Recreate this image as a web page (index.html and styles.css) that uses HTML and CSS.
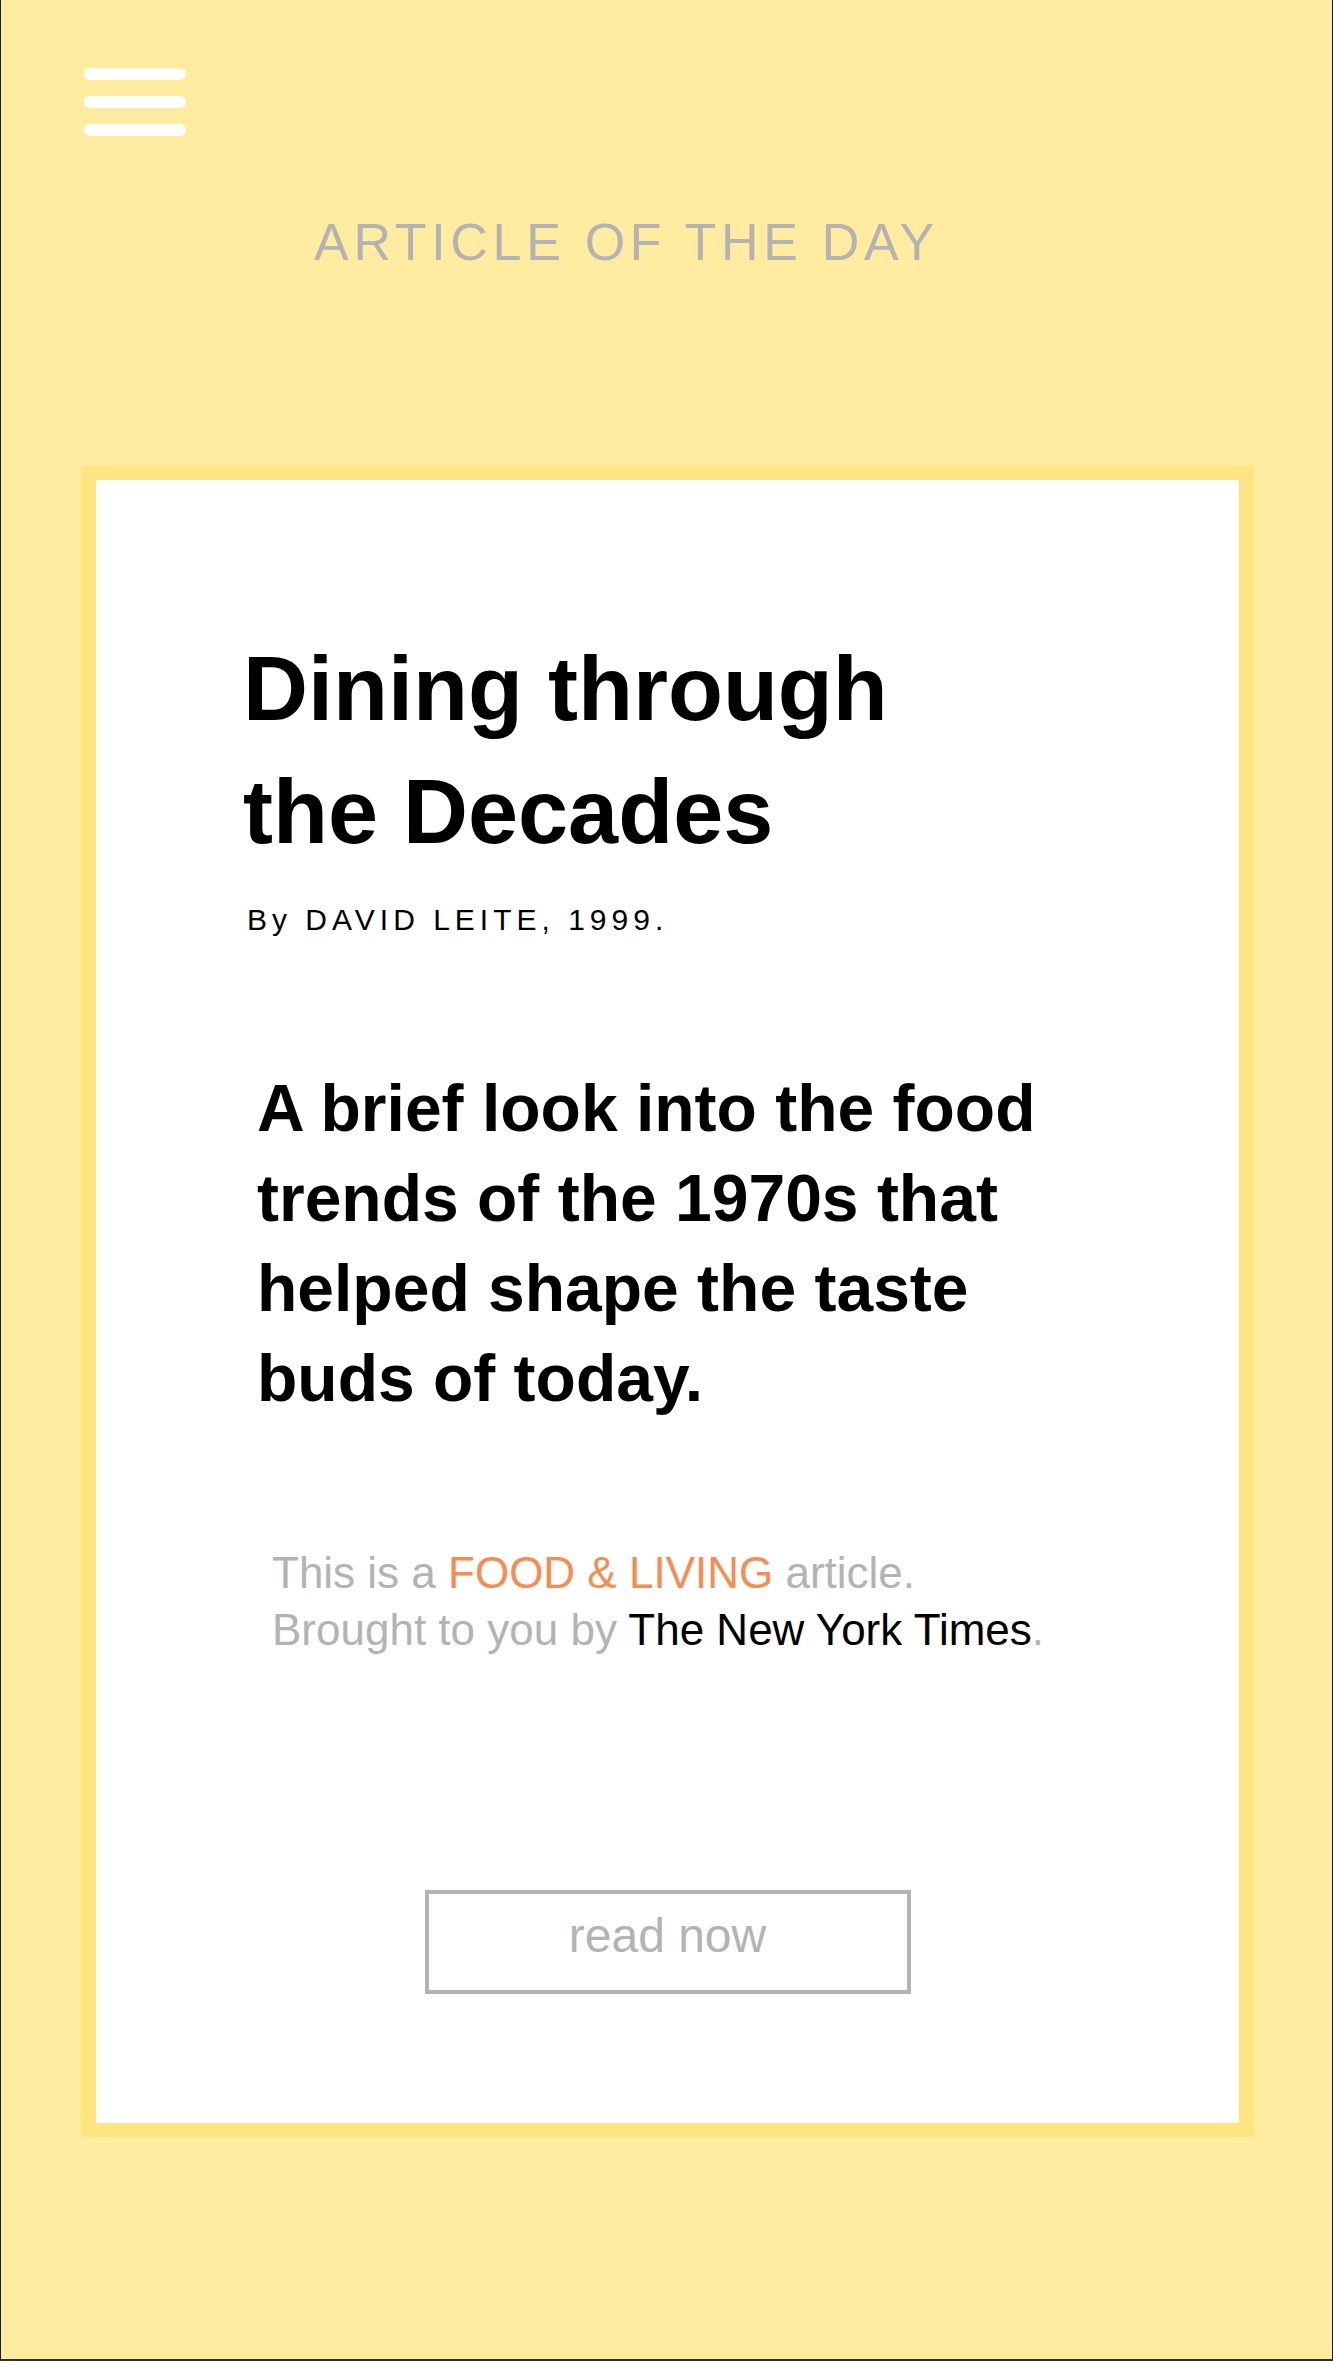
FILE: index.html
```html
<!DOCTYPE html>
<html lang="en">
<head>
<meta charset="utf-8">
<title>Article of the Day</title>
<link rel="stylesheet" href="styles.css">
</head>
<body>
<div class="page">
  <header class="top">
    <button class="menu" aria-label="Menu">
      <span class="bar"></span>
      <span class="bar"></span>
      <span class="bar"></span>
    </button>
    <h2 class="kicker">ARTICLE OF THE DAY</h2>
  </header>
  <main class="card">
    <article class="article">
      <h1 class="headline">Dining through<br>the Decades</h1>
      <p class="byline">By DAVID LEITE, 1999.</p>
      <p class="summary">A brief look into the food<br>trends of the 1970s that<br>helped shape the taste<br>buds of today.</p>
      <p class="source">This is a <span class="section">FOOD &amp; LIVING</span> article.<br>Brought to you by <span class="paper">The New York Times</span>.</p>
      <div class="action"><a class="read" href="#">read now</a></div>
    </article>
  </main>
</div>
</body>
</html>
```
FILE: styles.css
```css
html, body {
  margin: 0;
  padding: 0;
  background: #ffffff;
}

body {
  font-family: "Liberation Sans", Arial, sans-serif;
}

.page {
  box-sizing: border-box;
  width: 1333px;
  height: 2361px;
  background: #ffeca1;
  border-left: 1px solid #1a1a1a;
  border-right: 1px solid #1a1a1a;
  border-bottom: 2px solid #333333;
  padding-top: 68px;
  display: flex;
  flex-direction: column;
}

.top {
  display: flex;
  flex-direction: column;
}

.menu {
  margin: 0 0 0 83px;
  padding: 0;
  border: 0;
  background: transparent;
  width: 102px;
  display: flex;
  flex-direction: column;
  gap: 16px;
}

.bar {
  display: block;
  width: 102px;
  height: 12px;
  border-radius: 6px;
  background: #ffffff;
}

.kicker {
  margin: 76px 0 0 313px;
  font-weight: 400;
  font-size: 52px;
  line-height: 60px;
  letter-spacing: 4.7px;
  color: #b3b3b3;
}

.card {
  box-sizing: border-box;
  margin: 194px 0 0 80px;
  width: 1173px;
  height: 1671px;
  border-style: solid;
  border-color: #ffe57f;
  border-width: 14px 15px;
  background: #ffffff;
}

.article {
  display: flex;
  flex-direction: column;
  padding: 148px 0 0 147px;
}

.headline {
  margin: 0;
  font-size: 90px;
  line-height: 123px;
  font-weight: 700;
  color: #000000;
}

.byline {
  margin: 28px 0 0 4px;
  font-size: 30px;
  line-height: 36px;
  letter-spacing: 5px;
  color: #000000;
}

.summary {
  margin: 125px 0 0 14px;
  font-size: 66px;
  line-height: 90px;
  font-weight: 700;
  color: #000000;
}

.source {
  margin: 121px 0 0 29px;
  font-size: 44px;
  line-height: 57px;
  color: #b3b3b3;
}

.section {
  color: #f98b4f;
}

.paper {
  color: #000000;
}

.action {
  margin: 232px 0 0 -147px;
  display: flex;
  justify-content: center;
}

.read {
  box-sizing: border-box;
  display: block;
  width: 486px;
  height: 104px;
  border: 4px solid #b3b3b3;
  padding-bottom: 12px;
  text-align: center;
  font-size: 48px;
  line-height: 84px;
  color: #b3b3b3;
  text-decoration: none;
}
```
